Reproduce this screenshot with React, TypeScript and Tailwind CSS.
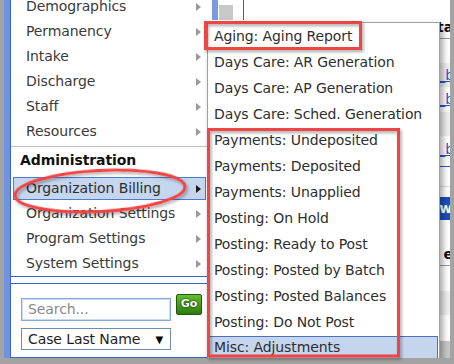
const leftItems = ['Demographics', 'Permanency', 'Intake', 'Discharge', 'Staff', 'Resources']
const adminItems = ['Organization Billing', 'Organization Settings', 'Program Settings', 'System Settings']
const billingItems = [
  'Aging: Aging Report',
  'Days Care: AR Generation',
  'Days Care: AP Generation',
  'Days Care: Sched. Generation',
  'Payments: Undeposited',
  'Payments: Deposited',
  'Payments: Unapplied',
  'Posting: On Hold',
  'Posting: Ready to Post',
  'Posting: Posted by Batch',
  'Posting: Posted Balances',
  'Posting: Do Not Post',
  'Misc: Adjustments',
]

function Arrow({ dark = false }: { dark?: boolean }) {
  return (
    <span
      className={`h-0 w-0 border-y-[4px] border-l-[5px] border-y-transparent ${
        dark ? 'border-l-[#1a1a1a]' : 'border-l-[#9a9a9a]'
      }`}
    />
  )
}

function MenuRow({ label, active = false }: { label: string; active?: boolean }) {
  if (active) {
    return (
      <div className="my-px ml-[2px] mr-px flex h-[23px] items-center justify-between border border-[#4d7ccc] bg-[#c6d6ef] pl-[12px] pr-[4px] text-[#2e2e2e]">
        <span>{label}</span>
        <Arrow dark />
      </div>
    )
  }
  return (
    <div className="flex h-[25px] items-center justify-between pl-[15px] pr-[6px] text-[#3a3a3a]">
      <span>{label}</span>
      <Arrow />
    </div>
  )
}

function LeftColumn() {
  return (
    <div className="flex w-[197px] shrink-0 flex-col border-l border-[#3b62c7] bg-white">
      <div className="-mt-[6px] border-b border-[#3b62c7]">
        {leftItems.map((item) => (
          <MenuRow key={item} label={item} />
        ))}
        <div className="mt-[2px] h-px bg-[#c4c4c4]" />
        <div className="flex h-[29px] items-end pb-[5px] pl-[9px] font-bold text-[#111]">Administration</div>
        {adminItems.map((item, index) => (
          <MenuRow key={item} label={item} active={index === 0} />
        ))}
      </div>
      <div className="mt-[6px] h-[75px] border-y border-[#3b62c7] pl-[10px] pt-[10px]">
        <div className="flex items-start">
          <div className="mt-[4px] flex h-[23px] w-[150px] items-center border border-[#86a9e2] pl-[6px] text-[#8a8a8a] shadow-[inset_0_0_0_1px_#c9daf5]">
            Search...
          </div>
          <div className="ml-[5px] flex h-[21px] w-[26px] items-center justify-center rounded-[2px] border border-[#1f5a08] bg-gradient-to-b from-[#62c030] to-[#2c7a0e] text-[11px] font-bold text-white [text-shadow:0_0_2px_#000]">
            Go
          </div>
        </div>
        <div className="mt-[7px] flex h-[22px] w-[150px] items-center justify-between border border-[#6f8db3] pl-[6px] pr-[7px] text-[#1e1e1e]">
          <span>Case Last Name</span>
          <span className="text-[10px] text-black">▼</span>
        </div>
      </div>
    </div>
  )
}

function LinkCell({ text, bg = 'bg-white', height }: { text: string; bg?: string; height: string }) {
  return (
    <div className={`flex ${height} items-center justify-end ${bg}`}>
      <span className="-mr-[4px] text-[#2c55d0] underline">{text}</span>
    </div>
  )
}

function PageBehind() {
  return (
    <div className="flex flex-1 flex-col bg-white">
      <div className="flex h-[39px] items-start border-b border-[#9a9a9a]">
        <div className="ml-[5px] h-[20px] w-[6px] bg-[#7a9be0]" />
        <div className="ml-px mt-[5px] h-[15px] w-[14px] bg-[#c8c8c8]" />
        <div className="ml-[10px] h-[20px] w-px bg-[#3a5fc0]" />
        <div className="ml-auto -mr-[3px] mt-[17px] font-bold text-[#111]">Sta</div>
      </div>
      <div className="h-[24px]" />
      <LinkCell text="_b" bg="bg-[#efefef]" height="h-[24px]" />
      <LinkCell text="_b" height="h-[25px]" />
      <div className="h-[24px] bg-[#efefef]" />
      <div className="flex h-[31px] items-start justify-end border-b border-[#2c55d0] pt-[3px]">
        <span className="-mr-[4px] text-[#2c55d0] underline">_b</span>
      </div>
      <div className="h-[20px] border-b border-[#dddddd]" />
      <div className="h-[10px]" />
      <div className="flex h-[23px] items-center justify-end bg-[#1a4fbf]">
        <span className="-mr-[2px] font-bold text-white">ow</span>
      </div>
      <div className="h-[24px]" />
      <div className="flex h-[22px] items-center justify-end border-b border-[#9a9a9a]">
        <span className="-mr-[3px] font-bold text-[#111]">e</span>
      </div>
      <div className="h-[25px]" />
      <div className="h-[24px] bg-[#efefef]" />
      <div className="h-[26px]" />
      <div className="flex-1 bg-[#c8c8c8]" />
    </div>
  )
}

function BillingMenu() {
  return (
    <div className="absolute left-[203px] top-[22px] w-[233px] border border-[#a0a0a0] bg-white shadow-[3px_3px_6px_rgba(0,0,0,0.35)]">
      {billingItems.map((item, index) =>
        index === billingItems.length - 1 ? (
          <div
            key={item}
            className="mx-px mt-px flex h-[23px] items-center border border-[#4a70c0] bg-[#c5d5ee] pl-[4px] text-[#2e2e2e]"
          >
            {item}
          </div>
        ) : (
          <div key={item} className="flex h-[26px] items-center pl-[6px] text-[#2e2e2e]">
            {item}
          </div>
        ),
      )}
    </div>
  )
}

function Annotations() {
  return (
    <svg className="pointer-events-none absolute left-0 top-0" width="454" height="364" viewBox="0 0 454 364">
      <defs>
        <filter id="shade" x="-10%" y="-10%" width="130%" height="130%">
          <feDropShadow dx="1.5" dy="2" stdDeviation="1.5" floodColor="#000" floodOpacity="0.35" />
        </filter>
      </defs>
      <g fill="none" stroke="#f04444" strokeWidth="3" filter="url(#shade)">
        <rect x="205.5" y="22.5" width="155" height="26" />
        <rect x="208.5" y="129.5" width="190" height="226.5" />
        <ellipse cx="100" cy="191" rx="85" ry="20.5" transform="rotate(-3 100 191)" />
      </g>
    </svg>
  )
}

export default function App() {
  return (
    <div className="relative h-[364px] w-[454px] overflow-hidden bg-[#a3a3a3] pb-[6px] pl-[4px] pr-[4px] font-['DejaVu_Sans',sans-serif] text-[14px] tracking-[-0.1px]">
      <div className="relative flex h-full overflow-hidden bg-white">
        <div className="w-[6px] shrink-0 bg-[#6f93e0]" />
        <LeftColumn />
        <PageBehind />
        <BillingMenu />
      </div>
      <Annotations />
    </div>
  )
}
